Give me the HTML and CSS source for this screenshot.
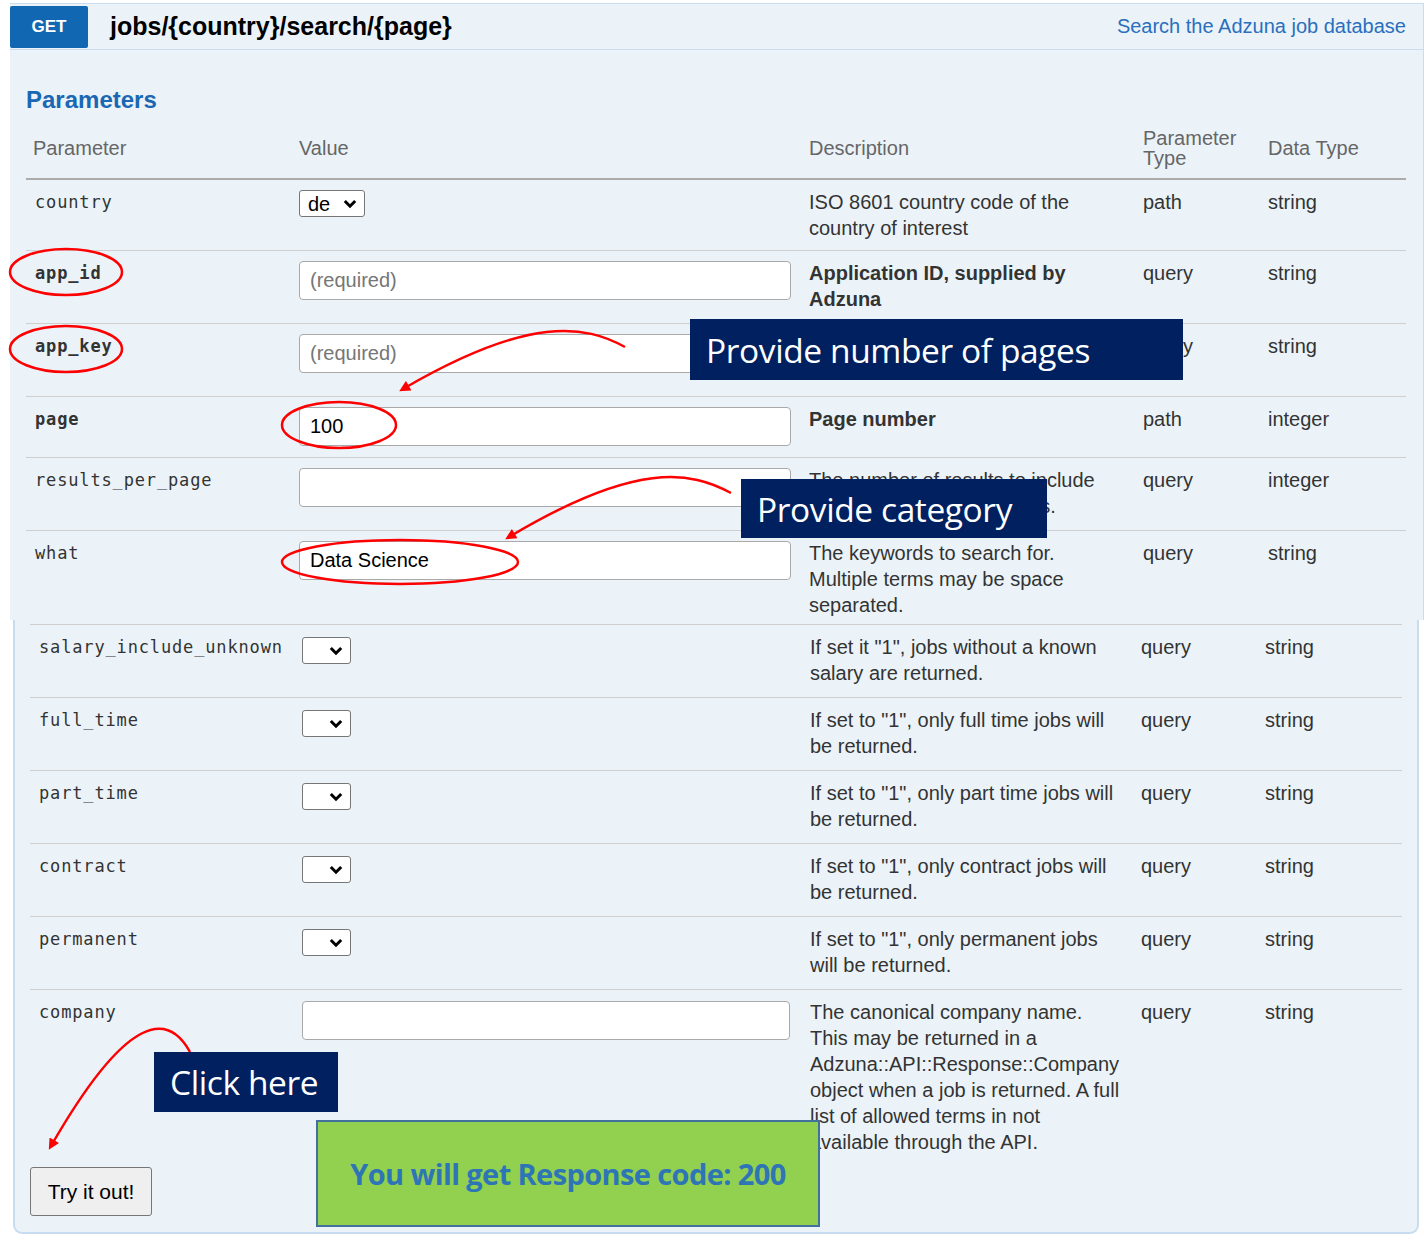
FILE: index.html
```html
<!DOCTYPE html>
<html lang="en">
<head>
<meta charset="utf-8">
<title>jobs/{country}/search/{page}</title>
<link rel="stylesheet" href="styles.css">
</head>
<body>
<section class="panel-top">
  <header class="op-header">
    <span class="verb">GET</span>
    <span class="path">jobs/{country}/search/{page}</span>
    <span class="summary">Search the Adzuna job database</span>
  </header>
  <div class="params">
    <h2 class="params-title">Parameters</h2>
    <div class="ptable ptable-top">
      <div class="thead">
        <div class="th th-name">Parameter</div>
        <div class="th">Value</div>
        <div class="th">Description</div>
        <div class="th th-two">Parameter<br>Type</div>
        <div class="th">Data Type</div>
      </div>
      <div class="row row-first">
        <div class="name">country</div>
        <div class="val"><div class="select select-country"><span>de</span><svg class="chev" width="14" height="10" viewBox="0 0 14 10"><path d="M1.8 2 L7 7.2 L12.2 2" fill="none" stroke="#000" stroke-width="3"/></svg></div></div>
        <div class="desc">ISO 8601 country code of the<br>country of interest</div>
        <div class="ptype">path</div>
        <div class="dtype">string</div>
      </div>
      <div class="row">
        <div class="name required">app_id</div>
        <div class="val"><input class="txt" type="text" placeholder="(required)"></div>
        <div class="desc strong">Application ID, supplied by<br>Adzuna</div>
        <div class="ptype">query</div>
        <div class="dtype">string</div>
      </div>
      <div class="row">
        <div class="name required">app_key</div>
        <div class="val"><input class="txt" type="text" placeholder="(required)"></div>
        <div class="desc strong">Application key, supplied by<br>Adzuna</div>
        <div class="ptype">query</div>
        <div class="dtype">string</div>
      </div>
      <div class="row">
        <div class="name required">page</div>
        <div class="val"><input class="txt" type="text" value="100"></div>
        <div class="desc strong">Page number</div>
        <div class="ptype">path</div>
        <div class="dtype">integer</div>
      </div>
      <div class="row">
        <div class="name">results_per_page</div>
        <div class="val"><input class="txt" type="text"></div>
        <div class="desc">The number of results to include<br>on a page of search results.</div>
        <div class="ptype">query</div>
        <div class="dtype">integer</div>
      </div>
      <div class="row row-last">
        <div class="name">what</div>
        <div class="val"><input class="txt" type="text" value="Data Science"></div>
        <div class="desc">The keywords to search for.<br>Multiple terms may be space<br>separated.</div>
        <div class="ptype">query</div>
        <div class="dtype">string</div>
      </div>
    </div>
  </div>
</section>

<section class="panel-bottom">
  <div class="ptable ptable-bottom">
    <div class="row">
      <div class="name">salary_include_unknown</div>
      <div class="val"><div class="select select-empty"><svg class="chev" width="14" height="10" viewBox="0 0 14 10"><path d="M1.8 2 L7 7.2 L12.2 2" fill="none" stroke="#000" stroke-width="3"/></svg></div></div>
      <div class="desc">If set it "1", jobs without a known<br>salary are returned.</div>
      <div class="ptype">query</div>
      <div class="dtype">string</div>
    </div>
    <div class="row">
      <div class="name">full_time</div>
      <div class="val"><div class="select select-empty"><svg class="chev" width="14" height="10" viewBox="0 0 14 10"><path d="M1.8 2 L7 7.2 L12.2 2" fill="none" stroke="#000" stroke-width="3"/></svg></div></div>
      <div class="desc">If set to "1", only full time jobs will<br>be returned.</div>
      <div class="ptype">query</div>
      <div class="dtype">string</div>
    </div>
    <div class="row">
      <div class="name">part_time</div>
      <div class="val"><div class="select select-empty"><svg class="chev" width="14" height="10" viewBox="0 0 14 10"><path d="M1.8 2 L7 7.2 L12.2 2" fill="none" stroke="#000" stroke-width="3"/></svg></div></div>
      <div class="desc">If set to "1", only part time jobs will<br>be returned.</div>
      <div class="ptype">query</div>
      <div class="dtype">string</div>
    </div>
    <div class="row">
      <div class="name">contract</div>
      <div class="val"><div class="select select-empty"><svg class="chev" width="14" height="10" viewBox="0 0 14 10"><path d="M1.8 2 L7 7.2 L12.2 2" fill="none" stroke="#000" stroke-width="3"/></svg></div></div>
      <div class="desc">If set to "1", only contract jobs will<br>be returned.</div>
      <div class="ptype">query</div>
      <div class="dtype">string</div>
    </div>
    <div class="row">
      <div class="name">permanent</div>
      <div class="val"><div class="select select-empty"><svg class="chev" width="14" height="10" viewBox="0 0 14 10"><path d="M1.8 2 L7 7.2 L12.2 2" fill="none" stroke="#000" stroke-width="3"/></svg></div></div>
      <div class="desc">If set to "1", only permanent jobs<br>will be returned.</div>
      <div class="ptype">query</div>
      <div class="dtype">string</div>
    </div>
    <div class="row row-company">
      <div class="name">company</div>
      <div class="val"><input class="txt txt-bottom" type="text"></div>
      <div class="desc desc-company">The canonical company name.<br>This may be returned in a<br>Adzuna::API::Response::Company<br>object when a job is returned. A full<br>list of allowed terms in not<br>available through the API.</div>
      <div class="ptype">query</div>
      <div class="dtype">string</div>
    </div>
  </div>
  <button class="try" type="button">Try it out!</button>
</section>

<svg class="marks" width="1424" height="1243" viewBox="0 0 1424 1243">
  <defs>
    <marker id="ah" viewBox="0 0 10 10" refX="6" refY="5" markerWidth="5.2" markerHeight="4.4" orient="auto">
      <path d="M0 0 L10 5 L0 10 Z" fill="#ff0000"/>
    </marker>
  </defs>
  <g fill="none" stroke="#ff0000" stroke-width="2.5">
    <ellipse cx="66" cy="272" rx="56" ry="23"/>
    <ellipse cx="66" cy="349" rx="56" ry="23"/>
    <ellipse cx="339" cy="425" rx="57" ry="23"/>
    <ellipse cx="400" cy="562" rx="118" ry="22"/>
    <path d="M625 347 C585 325 530 315 403 389" marker-end="url(#ah)"/>
    <path d="M731 493 C691 471 636 461 509 537" marker-end="url(#ah)"/>
    <path d="M190 1052 C168 1012 128 1012 51 1146" marker-end="url(#ah)"/>
  </g>
</svg>

<div class="callout callout-pages">Provide number of pages</div>
<div class="callout callout-category">Provide category</div>
<div class="callout callout-click">Click here</div>
<div class="response-note">You will get Response code: 200</div>
</body>
</html>
```

FILE: styles.css
```css
* { box-sizing: border-box; }
html, body { margin: 0; padding: 0; }
body {
  position: relative;
  width: 1424px;
  height: 1243px;
  overflow: hidden;
  background: #ffffff;
  font-family: "Liberation Sans", Arial, sans-serif;
  color: #333333;
}

/* ---------- top panel ---------- */
.panel-top {
  margin: 3px 0 0 10px;
  width: 1414px;
  background: #ebf3f9;
  border-top: 1px solid #c9ddef;
  border-right: 1px solid #c9ddef;
}
.op-header {
  display: flex;
  align-items: center;
  height: 46px;
  border-bottom: 1px solid #c9ddef;
  padding-right: 17px;
}
.verb {
  width: 78px;
  height: 42px;
  display: flex;
  align-items: center;
  justify-content: center;
  background: #1167b1;
  color: #ffffff;
  font-weight: bold;
  font-size: 17px;
  border-radius: 2px;
}
.path {
  margin-left: 22px;
  font-weight: bold;
  font-size: 25px;
  color: #000000;
}
.summary {
  margin-left: auto;
  font-size: 20px;
  color: #2a6fbe;
}
.params {
  padding: 0 17px 0 16px;
}
.params-title {
  margin: 36px 0 8px;
  font-size: 24px;
  line-height: 28px;
  font-weight: bold;
  color: #1a67b3;
}

/* ---------- tables ---------- */
.ptable-top .thead,
.ptable-top .row {
  display: grid;
  grid-template-columns: 265px 510px 334px 125px 146px;
}
.ptable-bottom .row {
  display: grid;
  grid-template-columns: 264px 508px 331px 124px 145px;
}
.thead {
  height: 58px;
  padding-bottom: 5px;
  align-items: center;
  border-bottom: 2px solid #ababab;
  color: #666666;
  font-size: 20px;
  line-height: 20px;
}
.th { padding: 0 8px; }
.th-name { padding-left: 7px; }

.row {
  padding: 9px 0 11px;
  align-items: start;
  font-size: 20px;
  line-height: 26px;
}
.row + .row { border-top: 1px solid #cfcfcf; }
.row-first { padding-bottom: 9px; }
.row-last { padding-bottom: 2px; }
.ptable-bottom .row:first-child { border-top: 1px solid #cfcfcf; }
.row-company { padding-bottom: 0; }

.row > div { padding: 0 8px; }
.row > .name {
  padding-left: 9px;
  font-family: "DejaVu Sans Mono", monospace;
  font-size: 17px;
  letter-spacing: 0.85px;
  color: #333333;
}
.name.required { font-weight: bold; }

.desc { white-space: nowrap; color: #333333; }
.desc.strong { font-weight: bold; }
.ptype, .dtype { color: #333333; }
.dtype { padding-top: 2px; }

/* ---------- controls ---------- */
.select {
  display: flex;
  align-items: center;
  justify-content: space-between;
  height: 27px;
  margin-top: 1px;
  background: #ffffff;
  border: 1.5px solid #767676;
  border-radius: 3px;
  padding: 0 7px 0 8px;
  font-size: 20px;
  color: #000000;
}
.select-country { width: 66px; }
.select-empty { width: 49px; margin-top: 3px; justify-content: flex-end; }
.chev { display: block; }

.txt {
  display: block;
  width: 492px;
  height: 39px;
  margin: 1px 0 0;
  padding: 0 10px;
  background: #ffffff;
  border: 1.5px solid #a9a9a9;
  border-radius: 4px;
  font-family: "Liberation Sans", Arial, sans-serif;
  font-size: 20px;
  color: #000000;
  outline: none;
}
.txt::placeholder { color: #767676; }
.txt-bottom { width: 488px; margin-top: 2px; }

/* ---------- bottom panel ---------- */
.panel-bottom {
  margin-left: 13px;
  width: 1406px;
  background: #ebf3f9;
  border: 2px solid #c8dcef;
  border-top: none;
  border-radius: 0 0 9px 9px;
  padding: 4px 15px 16px 15px;
}
.try {
  display: block;
  width: 122px;
  height: 49px;
  margin-top: 12px;
  padding: 0;
  background: #efefef;
  border: 1.5px solid #767676;
  border-radius: 3px;
  font-family: "Liberation Sans", Arial, sans-serif;
  font-size: 21px;
  color: #000000;
}

/* ---------- annotations (overlay) ---------- */
.marks {
  position: absolute;
  top: 0;
  left: 0;
  z-index: 1;
  pointer-events: none;
}
.callout {
  position: absolute;
  z-index: 2;
  display: flex;
  align-items: center;
  padding-left: 16px;
  background: #002060;
  color: #ffffff;
  font-family: "Open Sans", "Lato", sans-serif;
  font-size: 33.5px;
  letter-spacing: -0.4px;
  white-space: nowrap;
}
.callout-pages { left: 690px; top: 319px; width: 493px; height: 61px; }
.callout-category { left: 741px; top: 479px; width: 306px; height: 59px; }
.callout-click { left: 154px; top: 1052px; width: 184px; height: 60px; }
.response-note {
  position: absolute;
  z-index: 2;
  left: 316px;
  top: 1120px;
  width: 504px;
  height: 107px;
  display: flex;
  align-items: center;
  justify-content: center;
  background: #92d050;
  border: 2px solid #41719c;
  color: #2e75b6;
  font-family: "Open Sans", "Lato", sans-serif;
  font-weight: bold;
  font-size: 29px;
  letter-spacing: -0.6px;
  white-space: nowrap;
}
```
